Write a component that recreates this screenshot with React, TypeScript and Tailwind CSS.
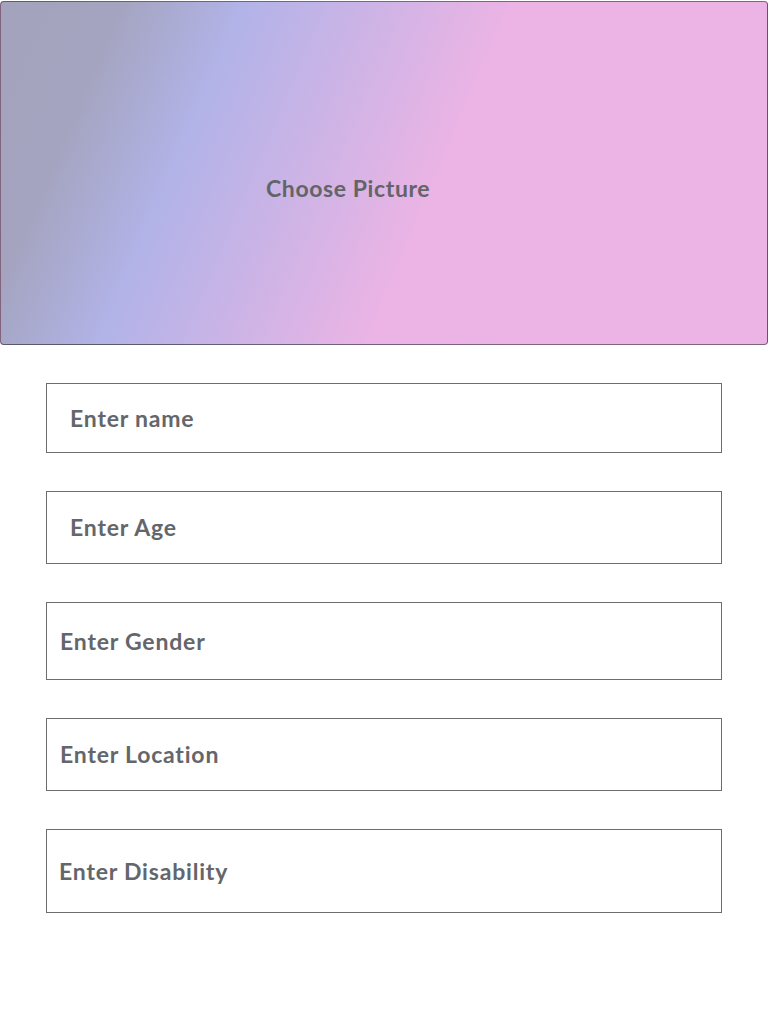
import React from "react";

const fields = [
  { label: "Enter name", h: "h-[70px]", pl: "pl-[23px]" },
  { label: "Enter Age", h: "h-[73px]", pl: "pl-[23px]" },
  { label: "Enter Gender", h: "h-[78px]", pl: "pl-[13px]" },
  { label: "Enter Location", h: "h-[73px]", pl: "pl-[13px]" },
  { label: "Enter Disability", h: "h-[84px]", pl: "pl-[12px]" },
];

export default function App() {
  return (
    <div
      className="w-[768px] h-[1024px] bg-white"
      style={{ fontFamily: "Lato, 'Open Sans', sans-serif" }}
    >
      <div className="pt-px">
        <div className="h-[344px] rounded-[4px] border border-black/45 bg-[linear-gradient(113deg,#a3a3bd_0%,#a4a4c0_13%,#b2b3e8_27%,#ecb4e4_57%,#ecb4e4_100%)] flex items-start pl-[265px] pt-[172px]">
          <span className="text-[23px] font-bold text-[#626468] leading-[28px] tracking-[0.6px]">
            Choose Picture
          </span>
        </div>
      </div>
      <div className="flex flex-col gap-[38px] px-[46px] pt-[38px]">
        {fields.map((f) => (
          <div
            key={f.label}
            className={`${f.h} ${f.pl} border border-[#6d6d6d] flex items-center`}
          >
            <span className="text-[23px] font-bold text-[#63666a] tracking-[0.8px]">
              {f.label}
            </span>
          </div>
        ))}
      </div>
    </div>
  );
}
